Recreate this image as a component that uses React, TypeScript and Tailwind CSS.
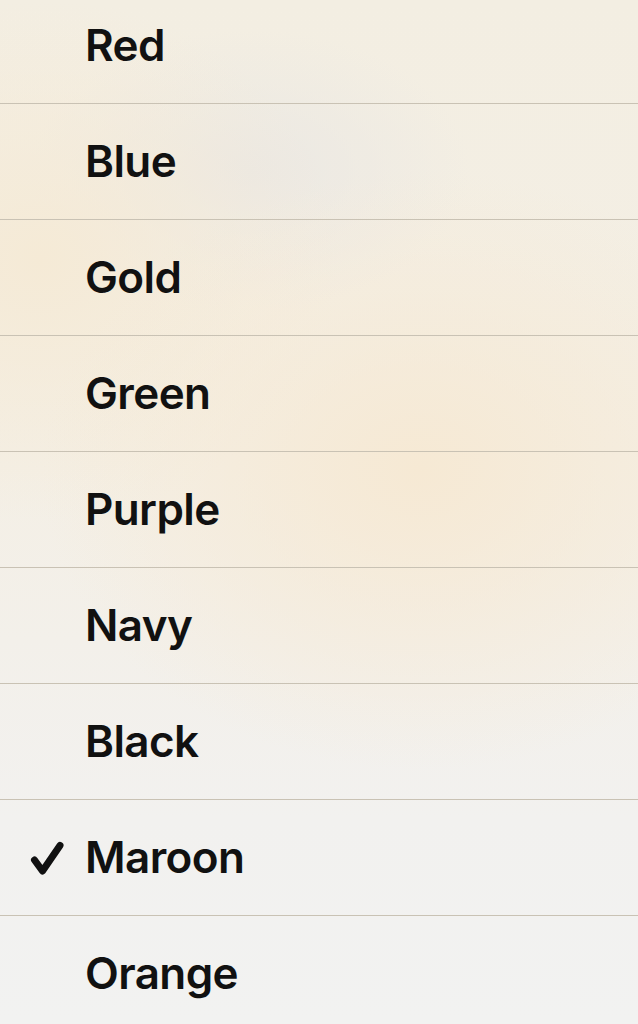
const colors = ["Red", "Blue", "Gold", "Green", "Purple", "Navy", "Black", "Maroon", "Orange"];
const selected = "Maroon";

function CheckMark() {
  return (
    <svg width="36" height="36" viewBox="0 0 36 36" className="text-[#111]">
      <path
        d="M5.5 20 L13.5 31 L31 5.5"
        fill="none"
        stroke="currentColor"
        strokeWidth="7"
        strokeLinecap="round"
        strokeLinejoin="round"
      />
    </svg>
  );
}

export default function App() {
  return (
    <div
      className="h-[1024px] w-[638px] overflow-hidden bg-[#f2f1f0] bg-[radial-gradient(ellipse_380px_300px_at_420px_470px,#f6e9d4_0%,transparent_100%),radial-gradient(ellipse_300px_260px_at_40px_260px,#f5ead6_0%,transparent_100%),radial-gradient(ellipse_220px_140px_at_250px_170px,#ebe8e3_0%,transparent_100%),linear-gradient(180deg,#f3eee2_0%,#f4efe5_45%,#f2f1ef_80%,#f2f2f1_100%)]"
      style={{ fontFamily: "Inter, 'Noto Sans', sans-serif" }}
    >
      <div className="-mt-[12px]">
        {colors.map((c, i) => (
          <div
            key={c}
            className={`flex h-[116px] items-center ${i < colors.length - 1 ? "border-b border-[#c9c2b4]" : ""}`}
          >
            <div className="flex w-[85px] shrink-0 pl-[29px]">
              {c === selected && <CheckMark />}
            </div>
            <span className="-mt-[2px] text-[44px] font-semibold tracking-[-0.6px] text-[#111]">{c}</span>
          </div>
        ))}
      </div>
    </div>
  );
}
